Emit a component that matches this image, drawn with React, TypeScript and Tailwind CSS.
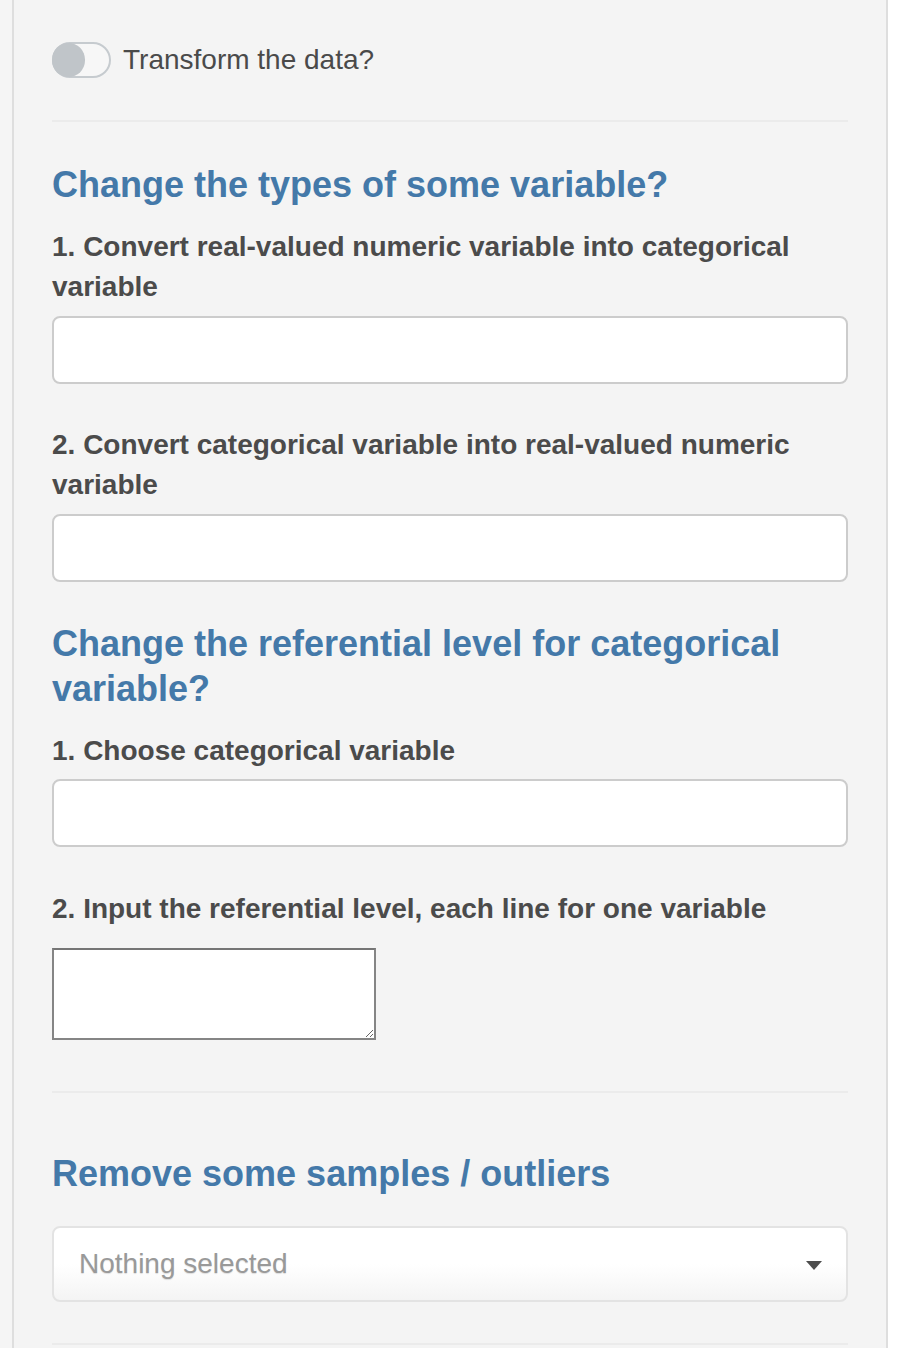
import React from "react";

const font = { fontFamily: '"Liberation Sans", Arial, Helvetica, sans-serif' };

function Toggle({ label }: { label: string }) {
  return (
    <div className="flex h-[40px] items-center">
      <span className="relative flex h-[36px] w-[59px] shrink-0 items-center rounded-full border-2 border-[#c6cbcf] bg-[#f7f7f7]">
        <span className="ml-[-2px] h-[34px] w-[33px] rounded-full bg-[#c0c5c9]" />
      </span>
      <span className="ml-[12px] text-[28px] leading-[40px] text-[#4a4a4a]">{label}</span>
    </div>
  );
}

function Heading({ children, className = "" }: { children: React.ReactNode; className?: string }) {
  return <h3 className={`text-[36px] font-bold leading-[45px] text-[#4479a9] ${className}`}>{children}</h3>;
}

function Label({ children, className = "" }: { children: React.ReactNode; className?: string }) {
  return <label className={`block text-[28px] font-bold leading-[40px] text-[#4b4b4b] ${className}`}>{children}</label>;
}

function TextInput({ className = "" }: { className?: string }) {
  return (
    <input
      type="text"
      className={`block h-[68px] w-full rounded-[8px] border-2 border-[#cccccc] bg-white px-4 outline-none ${className}`}
    />
  );
}

function Divider({ className = "" }: { className?: string }) {
  return <div className={`h-[2px] w-full bg-[#ebebeb] ${className}`} />;
}

export default function App() {
  return (
    <div className="flex min-h-[1348px] w-[902px] bg-white" style={font}>
      <div className="w-[12px] shrink-0 bg-[#f5f5f5]" />
      <div className="w-[876px] shrink-0 overflow-hidden border-x-2 border-[#dedede] bg-[#f4f4f4] px-[38px] pt-[40px]">
        <Toggle label="Transform the data?" />
        <Divider className="mt-[40px]" />

        <Heading className="mt-[40px]">Change the types of some variable?</Heading>
        <Label className="mt-[20px]">1. Convert real-valued numeric variable into categorical variable</Label>
        <TextInput className="mt-[9px]" />

        <Label className="mt-[41px]">2. Convert categorical variable into real-valued numeric variable</Label>
        <TextInput className="mt-[9px]" />

        <Heading className="mt-[39px]">Change the referential level for categorical variable?</Heading>
        <Label className="mt-[20px]">1. Choose categorical variable</Label>
        <TextInput className="mt-[8px]" />

        <Label className="mt-[42px]">2. Input the referential level, each line for one variable</Label>
        <textarea className="mt-[19px] block h-[92px] w-[324px] border-2 border-[#858585] border-t-[#757575] bg-white outline-none" />

        <Divider className="mt-[51px]" />

        <Heading className="mt-[58px]">Remove some samples / outliers</Heading>
        <button
          type="button"
          className="mt-[30px] flex h-[76px] w-full items-center justify-between rounded-[8px] border-2 border-[#e3e3e3] bg-gradient-to-b from-white from-50% to-[#f4f4f4] pl-[25px] pr-[24px] text-left"
        >
          <span className="text-[28px] leading-[40px] text-[#999999] [text-shadow:0_1px_1px_rgba(0,0,0,0.12)]">
            Nothing selected
          </span>
          <svg width="16" height="9" viewBox="0 0 16 9" className="mt-[2px]">
            <polygon points="0,0 16,0 8,9" fill="#4d4d4d" />
          </svg>
        </button>

        <Divider className="mt-[41px]" />
        <div className="h-[40px]" />
      </div>
      <div className="flex-1 bg-white" />
    </div>
  );
}
